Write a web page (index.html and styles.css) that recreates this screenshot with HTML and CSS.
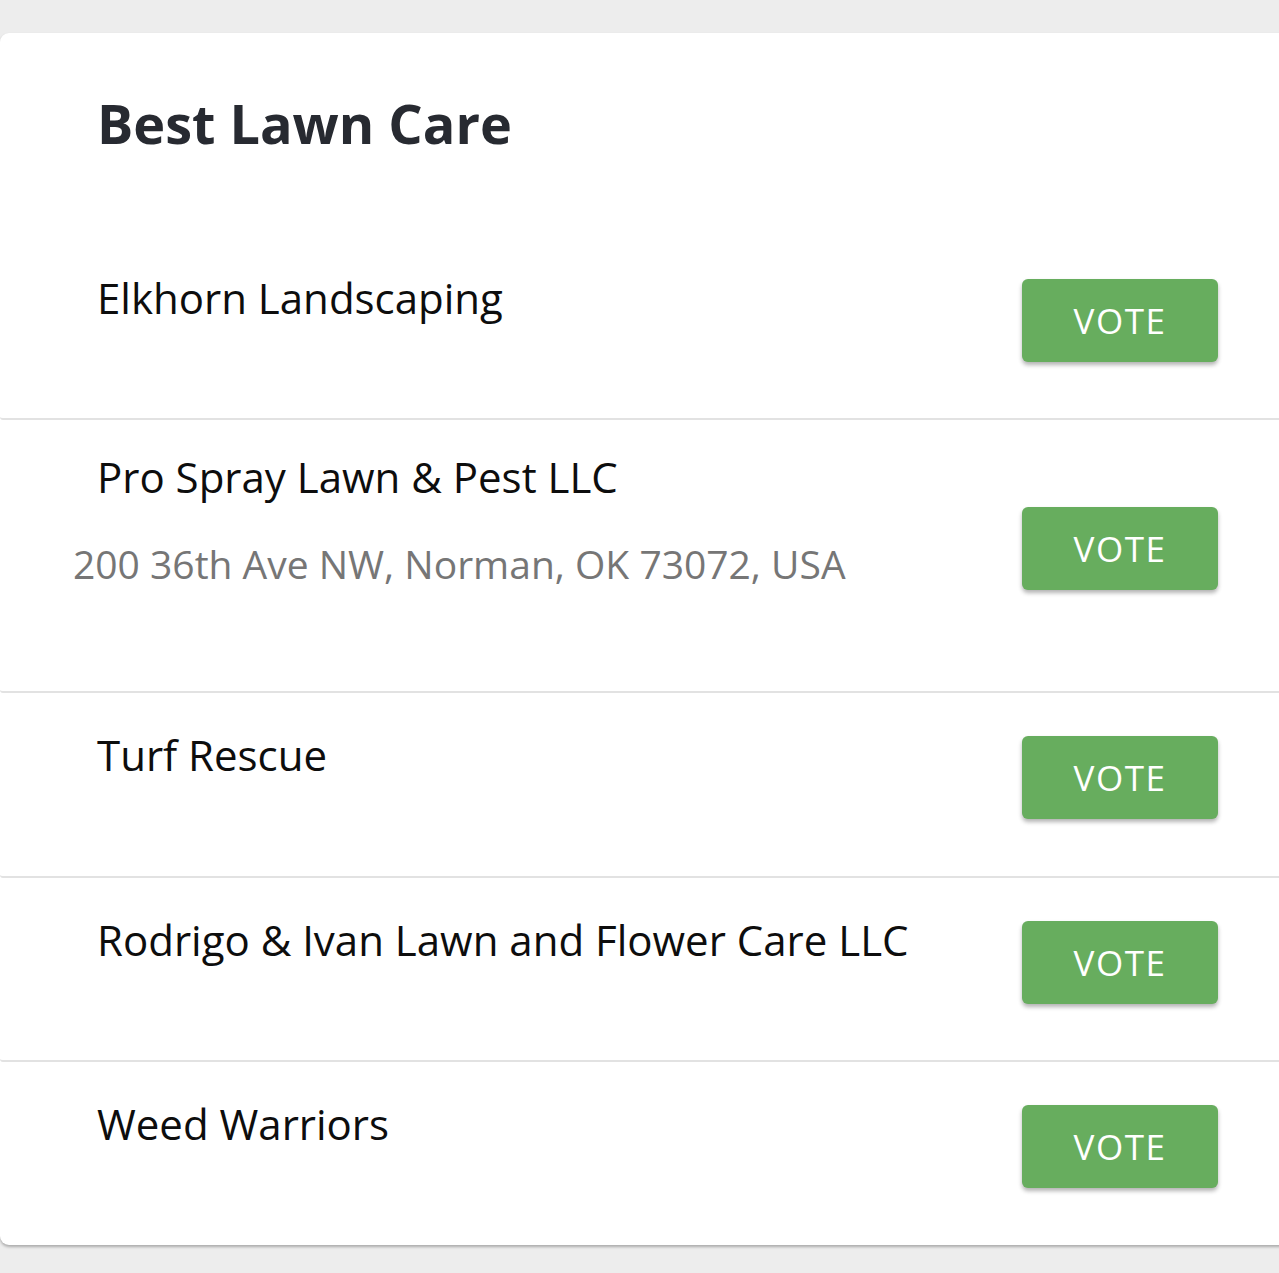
FILE: index.html
```html
<!DOCTYPE html>
<html lang="en">
<head>
<meta charset="utf-8">
<title>Best Lawn Care</title>
<link rel="stylesheet" href="styles.css">
</head>
<body>
<main class="card">
  <header class="card-header">
    <h1 class="card-title">Best Lawn Care</h1>
  </header>
  <ul class="nominees">
    <li class="nominee">
      <div class="nominee-info">
        <div class="nominee-name">Elkhorn Landscaping</div>
      </div>
      <button class="vote-btn" type="button">VOTE</button>
    </li>
    <li class="nominee nominee--address">
      <div class="nominee-info">
        <div class="nominee-name">Pro Spray Lawn &amp; Pest LLC</div>
        <div class="nominee-address">200 36th Ave NW, Norman, OK 73072, USA</div>
      </div>
      <button class="vote-btn" type="button">VOTE</button>
    </li>
    <li class="nominee">
      <div class="nominee-info">
        <div class="nominee-name">Turf Rescue</div>
      </div>
      <button class="vote-btn" type="button">VOTE</button>
    </li>
    <li class="nominee">
      <div class="nominee-info">
        <div class="nominee-name">Rodrigo &amp; Ivan Lawn and Flower Care LLC</div>
      </div>
      <button class="vote-btn" type="button">VOTE</button>
    </li>
    <li class="nominee">
      <div class="nominee-info">
        <div class="nominee-name">Weed Warriors</div>
      </div>
      <button class="vote-btn" type="button">VOTE</button>
    </li>
  </ul>
</main>
</body>
</html>
```
FILE: styles.css
```css
html, body {
  margin: 0;
  padding: 0;
  overflow-x: hidden;
}

body {
  background: #ededed;
  font-family: "Open Sans", "Noto Sans", "DejaVu Sans", sans-serif;
  padding: 33px 0 20px 0;
}

.card {
  display: block;
  background: #ffffff;
  margin-right: -12px;
  border-radius: 9px;
  box-shadow: 0 2px 3px rgba(0, 0, 0, 0.28);
}

.card-header {
  padding: 57px 0 79.5px 97px;
}

.card-title {
  margin: 0;
  font-size: 54px;
  line-height: 66px;
  font-weight: 700;
  color: #272a31;
}

.nominees {
  list-style: none;
  margin: 0;
  padding: 0;
}

.nominee {
  display: flex;
  align-items: center;
  justify-content: space-between;
  padding: 43px 73px 56.5px 97px;
  border-bottom: 2px solid #e2e2e2;
  border-radius: 3px;
}

.nominee:last-child {
  border-bottom: none;
}

.nominee-info {
  align-self: flex-start;
  display: flex;
  flex-direction: column;
}

.nominee-name {
  margin-top: -6px;
  font-size: 42px;
  line-height: 50px;
  color: #0d0d0d;
}

.nominee--address .nominee-name {
  margin-top: -11px;
}

.nominee-address {
  margin: 39px 0 47.5px -24px;
  font-size: 39px;
  line-height: 46px;
  color: #767676;
}

.vote-btn {
  flex: none;
  width: 196px;
  height: 83px;
  border: none;
  border-radius: 6px;
  background: #67ad5e;
  color: #ffffff;
  font-family: "Open Sans", "Noto Sans", sans-serif;
  font-size: 35px;
  letter-spacing: 1.5px;
  box-shadow: 0 3px 4px rgba(0, 0, 0, 0.3);
  padding: 0;
}
```
